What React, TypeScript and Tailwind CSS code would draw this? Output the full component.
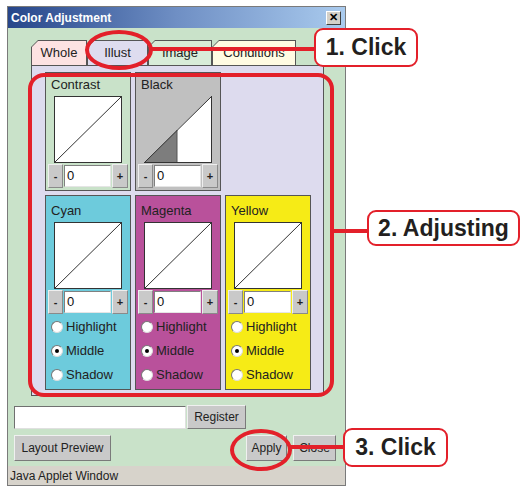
import React from "react";

const RED = "border-[#e3202a]";

interface ChannelProps {
  name: string;
  bg: string;
  tall?: boolean;
  black?: boolean;
  mode?: string;
}

const Graph: React.FC<{ black?: boolean }> = ({ black }) => {
  if (black) {
    return (
      <svg width="68" height="67" viewBox="0 0 68 67" className="block">
        <polygon points="1,66 33,34 33,66" fill="#7d7d7d" />
        <polygon points="33,34 67,1 67,66 33,66" fill="#ffffff" />
        <line x1="33" y1="34" x2="33" y2="66" stroke="#555" strokeWidth="1" />
        <line x1="0.5" y1="66.5" x2="67.5" y2="0.5" stroke="#333" strokeWidth="1" />
        <line x1="67.5" y1="0" x2="67.5" y2="67" stroke="#333" strokeWidth="1" />
        <line x1="0" y1="66.5" x2="68" y2="66.5" stroke="#333" strokeWidth="1" />
      </svg>
    );
  }
  return (
    <svg width="68" height="67" viewBox="0 0 68 67" className="block">
      <rect x="0.5" y="0.5" width="67" height="66" fill="#fff" stroke="#333" strokeWidth="1" />
      <line x1="1" y1="66" x2="67" y2="1" stroke="#333" strokeWidth="1" />
    </svg>
  );
};

const SpinButton: React.FC<{ label: string; w: string }> = ({ label, w }) => (
  <div
    className={`${w} h-[24px] bg-[#c9c9c9] border border-t-[#eee] border-l-[#eee] border-r-[#8a8a8a] border-b-[#8a8a8a] flex items-center justify-center text-[11px] font-bold text-[#222]`}
  >
    {label}
  </div>
);

const Radio: React.FC<{ label: string; checked?: boolean }> = ({ label, checked }) => (
  <div className="flex items-center h-[24px] pl-[5px]">
    <div className="w-[12px] h-[12px] rounded-full bg-white border border-t-[#777] border-l-[#777] border-r-[#ddd] border-b-[#ddd] flex items-center justify-center">
      {checked && <div className="w-[4px] h-[4px] rounded-full bg-black" />}
    </div>
    <span className="ml-[3px] text-[13px] text-[#222]">{label}</span>
  </div>
);

const Channel: React.FC<ChannelProps> = ({ name, bg, tall, black, mode }) => (
  <div className={`${bg} border border-[#555] h-full flex flex-col ${tall ? "pt-[7px]" : "pt-[4px]"}`}>
    <div className="pl-[5px] text-[13px] leading-[15px] text-[#222]">{name}</div>
    <div className="ml-[8px] mt-[4px]">
      <Graph black={black} />
    </div>
    <div className="flex items-center ml-[2px] mt-[1px]">
      <SpinButton label="-" w="w-[15px]" />
      <div className="w-[47px] h-[22px] ml-[1px] bg-white border border-t-[#808080] border-l-[#808080] border-r-[#e5e5e5] border-b-[#e5e5e5] text-[13px] leading-[20px] pl-[2px] text-[#111]">
        0
      </div>
      <div className="ml-[1px]">
        <SpinButton label="+" w="w-[16px]" />
      </div>
    </div>
    {tall && (
      <div className="mt-[1px]">
        <Radio label="Highlight" checked={mode === "Highlight"} />
        <Radio label="Middle" checked={mode === "Middle"} />
        <Radio label="Shadow" checked={mode === "Shadow"} />
      </div>
    )}
  </div>
);

const Tab: React.FC<{ label: string; w: string; bg: string }> = ({ label, w, bg }) => (
  <div className={`${w} h-[25px] bg-[#555] pt-px pl-px pr-px [clip-path:polygon(7px_0,100%_0,100%_100%,0_100%,0_7px)]`}>
    <div
      className={`${bg} h-full flex items-center justify-center text-[13px] text-[#222] [clip-path:polygon(6px_0,100%_0,100%_100%,0_100%,0_6px)]`}
    >
      {label}
    </div>
  </div>
);

const Button: React.FC<{ label: string; w: string; h: string }> = ({ label, w, h }) => (
  <div
    className={`${w} ${h} bg-[#c9c9c9] border border-t-[#f0f0f0] border-l-[#f0f0f0] border-r-[#7a7a7a] border-b-[#7a7a7a] flex items-center justify-center text-[12px] text-[#222]`}
  >
    {label}
  </div>
);

const Callout: React.FC<{ text: string; className: string }> = ({ text, className }) => (
  <div
    className={`absolute bg-white border-2 ${RED} rounded-[9px] flex items-center justify-center text-[23px] font-bold text-[#231f20] font-['Liberation_Sans',Arial,sans-serif] ${className}`}
  >
    {text}
  </div>
);

export default function App() {
  return (
    <div className="relative w-[521px] h-[487px] bg-white overflow-hidden font-['Liberation_Sans',Arial,sans-serif]">
      {/* applet window */}
      <div className="ml-[7px] mt-[6px] w-[339px] h-[480px] border border-[#7a7a7a] bg-[#c9e2c9] flex flex-col">
        <div className="h-[21px] bg-gradient-to-r from-[#27468a] via-[#6f8fc4] to-[#aacbee] flex items-center justify-between px-[3px]">
          <span className="text-white font-bold text-[12px]">Color Adjustment</span>
          <div className="w-[15px] h-[14px] bg-[#d4d0c8] border border-t-white border-l-white border-r-[#404040] border-b-[#404040] flex items-center justify-center text-[11px] font-bold leading-none text-black mr-[1px]">
            ✕
          </div>
        </div>

        <div className="pl-[23px] pr-[21px] pt-[12px]">
          <div className="flex">
            <Tab label="Whole" w="w-[56px]" bg="bg-[#fde2e2]" />
            <Tab label="Illust" w="w-[61px]" bg="bg-[#dedcef]" />
            <Tab label="Image" w="w-[64px]" bg="bg-[#d8ecd8]" />
            <Tab label="Conditions" w="w-[84px]" bg="bg-[#fffbe2]" />
          </div>
          <div className="h-[331px] bg-[#dddbee] border border-[#555] pl-[13px] pt-[6px]">
            <div className="grid grid-cols-[86px_86px_86px] grid-rows-[119px_195px] gap-x-[4px] gap-y-[4px]">
              <Channel name="Contrast" bg="bg-[#c9e2c9]" />
              <Channel name="Black" bg="bg-[#c0c0c0]" black />
              <div />
              <Channel name="Cyan" bg="bg-[#6dcbdc]" tall mode="Middle" />
              <Channel name="Magenta" bg="bg-[#b9519b]" tall mode="Middle" />
              <Channel name="Yellow" bg="bg-[#f6eb16]" tall mode="Middle" />
            </div>
          </div>
        </div>

        <div className="flex items-center pl-[6px] mt-[9px]">
          <div className="w-[172px] h-[23px] bg-white border border-t-[#707070] border-l-[#707070] border-r-[#e0e0e0] border-b-[#e0e0e0]" />
          <div className="ml-[1px]">
            <Button label="Register" w="w-[59px]" h="h-[24px]" />
          </div>
        </div>

        <div className="flex items-center pl-[6px] pr-[9px] mt-[6px]">
          <Button label="Layout Preview" w="w-[97px]" h="h-[26px]" />
          <div className="ml-auto">
            <Button label="Apply" w="w-[41px]" h="h-[26px]" />
          </div>
          <div className="ml-[6px]">
            <Button label="Close" w="w-[43px]" h="h-[26px]" />
          </div>
        </div>

        <div className="mt-auto h-[19px] bg-[#d7d3cb] flex items-center pl-[2px] text-[12px] text-[#222]">
          Java Applet Window
        </div>
      </div>

      {/* annotations */}
      <div className={`absolute left-[28px] top-[73px] w-[306px] h-[324px] border-4 ${RED} rounded-[16px]`} />
      <div className={`absolute left-[85px] top-[30px] w-[68px] h-[40px] border-4 ${RED} rounded-[50%]`} />
      <div className="absolute left-[152px] top-[47px] w-[163px] h-[4px] bg-[#e3202a]" />
      <Callout text="1. Click" className="left-[314px] top-[28px] w-[104px] h-[39px]" />

      <div className="absolute left-[333px] top-[229px] w-[35px] h-[4px] bg-[#e3202a]" />
      <Callout text="2. Adjusting" className="left-[367px] top-[210px] w-[153px] h-[36px]" />

      <div className={`absolute left-[230px] top-[429px] w-[62px] h-[42px] border-4 ${RED} rounded-[50%]`} />
      <div className="absolute left-[291px] top-[445px] w-[53px] h-[4px] bg-[#e3202a]" />
      <Callout text="3. Click" className="left-[343px] top-[428px] w-[105px] h-[39px]" />
    </div>
  );
}
